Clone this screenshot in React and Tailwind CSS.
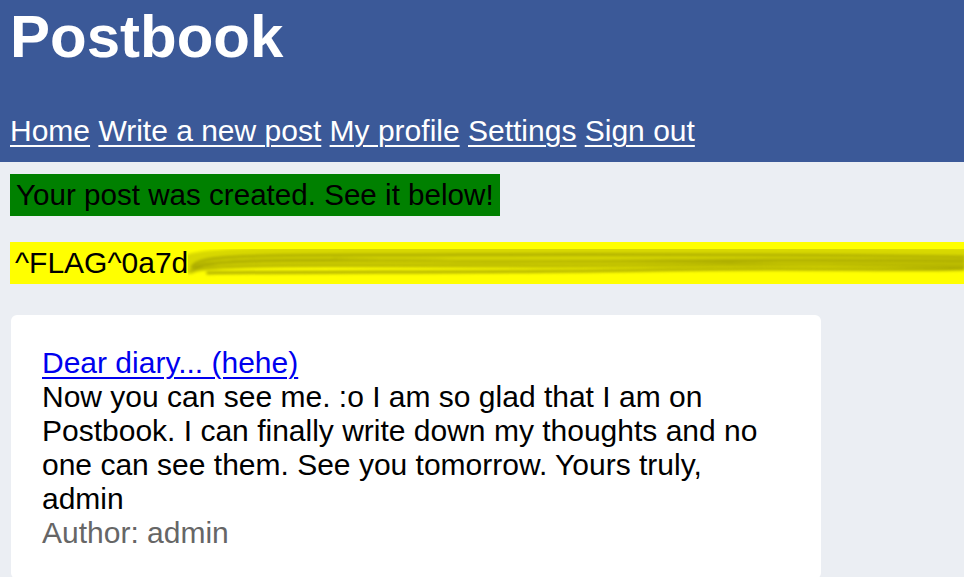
function Scribble() {
  return (
    <svg className="h-[30px] w-full" viewBox="0 0 800 30" preserveAspectRatio="none">
      <defs>
        <filter id="bl" x="-5%" y="-50%" width="110%" height="200%">
          <feGaussianBlur stdDeviation="1.6" />
        </filter>
      </defs>
      <g filter="url(#bl)" fill="none" strokeLinecap="round">
        <path d="M2 15 C 20 6, 200 5, 800 9" stroke="#d8d800" strokeWidth="20" />
        <path d="M4 18 C 10 8, 40 6, 180 6 S 500 4, 800 8" stroke="#a6a600" strokeWidth="2.5" />
        <path d="M6 20 C 12 12, 60 10, 260 12 S 560 9, 800 12" stroke="#9e9e00" strokeWidth="2.5" />
        <path d="M3 22 C 14 16, 80 16, 300 17 S 620 14, 800 16" stroke="#b4b400" strokeWidth="3" />
        <path d="M20 24 C 120 22, 300 24, 480 21 S 700 22, 800 20" stroke="#a0a000" strokeWidth="2.5" />
        <path d="M150 10 C 300 14, 450 12, 560 14 S 720 18, 800 18" stroke="#b8b800" strokeWidth="2" />
      </g>
    </svg>
  );
}

export default function App() {
  const font = { fontFamily: '"Liberation Sans", Arial, sans-serif' };
  const link = "underline decoration-[2px] underline-offset-[4px]";
  return (
    <div className="min-h-[577px] w-[964px] overflow-hidden bg-[#ebeef3] text-[30px] leading-[34px] text-black" style={font}>
      <header className="bg-[#3b5998] pl-[10px] pt-[3px] pb-[14px] text-white">
        <h1 className="m-0 text-[60px] font-bold leading-[68px]">Postbook</h1>
        <nav className="mt-[43px] whitespace-nowrap">
          <a href="#" className={link}>Home</a>{" "}
          <a href="#" className={link}>Write a new post</a>{" "}
          <a href="#" className={link}>My profile</a>{" "}
          <a href="#" className={link}>Settings</a>{" "}
          <a href="#" className={link}>Sign out</a>
        </nav>
      </header>
      <div className="pl-[10px] pt-[12px]">
        <div className="inline-block bg-[#008000] px-[6px] py-[4px] text-[29.6px]">Your post was created. See it below!</div>
      </div>
      <div className="mt-[26px] ml-[10px] flex h-[42px] items-center overflow-hidden bg-[#ffff00] pl-[5px]">
        <span className="whitespace-nowrap">^FLAG^0a7d</span>
        <div className="flex-1 pt-[2px]">
          <Scribble />
        </div>
      </div>
      <div className="ml-[11px] mt-[31px] w-[810px] rounded-[6px] bg-white pl-[31px] pr-[40px] pt-[31px] pb-[29px]">
        <a href="#" className={"text-[#0000ee] " + link}>Dear diary... (hehe)</a>
        <div>Now you can see me. :o I am so glad that I am on Postbook. I can finally write down my thoughts and no one can see them. See you tomorrow. Yours truly, admin</div>
        <div className="text-[#666666]">Author: admin</div>
      </div>
    </div>
  );
}
